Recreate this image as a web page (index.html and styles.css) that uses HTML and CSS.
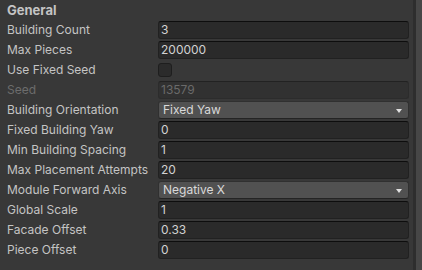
FILE: index.html
```html
<!DOCTYPE html>
<html lang="en">
<head>
    <meta charset="UTF-8">
    <meta name="viewport" content="width=device-width, initial-scale=1.0">
    <title>Inspector</title>
    <link rel="stylesheet" href="styles.css">
</head>
<body>
    <div class="window">
        <section class="inspector">
            <h2 class="group-title">General</h2>
            <div class="props">
                <label class="prop-label">Building Count</label>
                <div class="field">3</div>

                <label class="prop-label">Max Pieces</label>
                <div class="field">200000</div>

                <label class="prop-label">Use Fixed Seed</label>
                <div class="toggle-cell"><span class="toggle"></span></div>

                <label class="prop-label disabled">Seed</label>
                <div class="field disabled">13579</div>

                <label class="prop-label">Building Orientation</label>
                <div class="dropdown">Fixed Yaw<span class="caret"></span></div>

                <label class="prop-label">Fixed Building Yaw</label>
                <div class="field">0</div>

                <label class="prop-label">Min Building Spacing</label>
                <div class="field">1</div>

                <label class="prop-label">Max Placement Attempts</label>
                <div class="field">20</div>

                <label class="prop-label">Module Forward Axis</label>
                <div class="dropdown">Negative X<span class="caret"></span></div>

                <label class="prop-label">Global Scale</label>
                <div class="field">1</div>

                <label class="prop-label">Facade Offset</label>
                <div class="field">0.33</div>

                <label class="prop-label">Piece Offset</label>
                <div class="field">0</div>
            </div>
        </section>
        <div class="scroll-strip"></div>
    </div>
</body>
</html>
```

FILE: styles.css
```css
:root {
    --bg: #383838;
    --label: #c4c4c4;
    --text: #d2d2d2;
    --field-bg: #2a2a2a;
    --field-border: #212121;
    --popup-bg: #515151;
}

* {
    box-sizing: border-box;
    margin: 0;
    padding: 0;
}

body {
    font-family: Inter, "Noto Sans", sans-serif;
    font-size: 12px;
    background: var(--bg);
    color: var(--label);
    height: 100vh;
    overflow: hidden;
}

.window {
    display: flex;
    height: 100%;
}

/* inspector panel */
.inspector {
    flex: 1;
    padding: 0 4px 0 7px;
}

.group-title {
    font-size: 13px;
    font-weight: 700;
    line-height: 20px;
    height: 20px;
    color: var(--label);
}

.props {
    display: grid;
    grid-template-columns: 151px 1fr;
    grid-auto-rows: 20px;
}

.prop-label {
    line-height: 20px;
    white-space: nowrap;
}

.prop-label.disabled {
    color: #6c6c6c;
}

/* text fields */
.field {
    margin: 1px 0;
    height: 18px;
    line-height: 16px;
    padding: 0 3px 0 2px;
    background: var(--field-bg);
    border: 1px solid var(--field-border);
    border-top-color: #0d0d0d;
    border-radius: 3px;
    color: var(--text);
}

.field.disabled {
    background: #313131;
    border-color: #2c2c2c;
    border-top-color: #222;
    color: #6a6a6a;
}

/* toggle */
.toggle-cell {
    display: flex;
    align-items: center;
}

.toggle {
    width: 14px;
    height: 14px;
    background: #2b2b2b;
    border: 1px solid #1e1e1e;
    border-radius: 3px;
}

/* popup */
.dropdown {
    margin: 1px 0;
    height: 18px;
    line-height: 16px;
    padding: 0 6px 0 4px;
    background: var(--popup-bg);
    border: 1px solid #303030;
    border-bottom-color: #242424;
    border-radius: 3px;
    color: #d9d9d9;
    display: flex;
    align-items: center;
    justify-content: space-between;
}

.caret {
    width: 1px;
    height: 0;
    border-left: 3px solid transparent;
    border-right: 3px solid transparent;
    border-top: 4px solid #e0e0e0;
    margin-top: 1px;
}

/* right edge */
.scroll-strip {
    width: 9px;
    background: #474747;
    border-left: 3px solid #2e2e2e;
}
```
